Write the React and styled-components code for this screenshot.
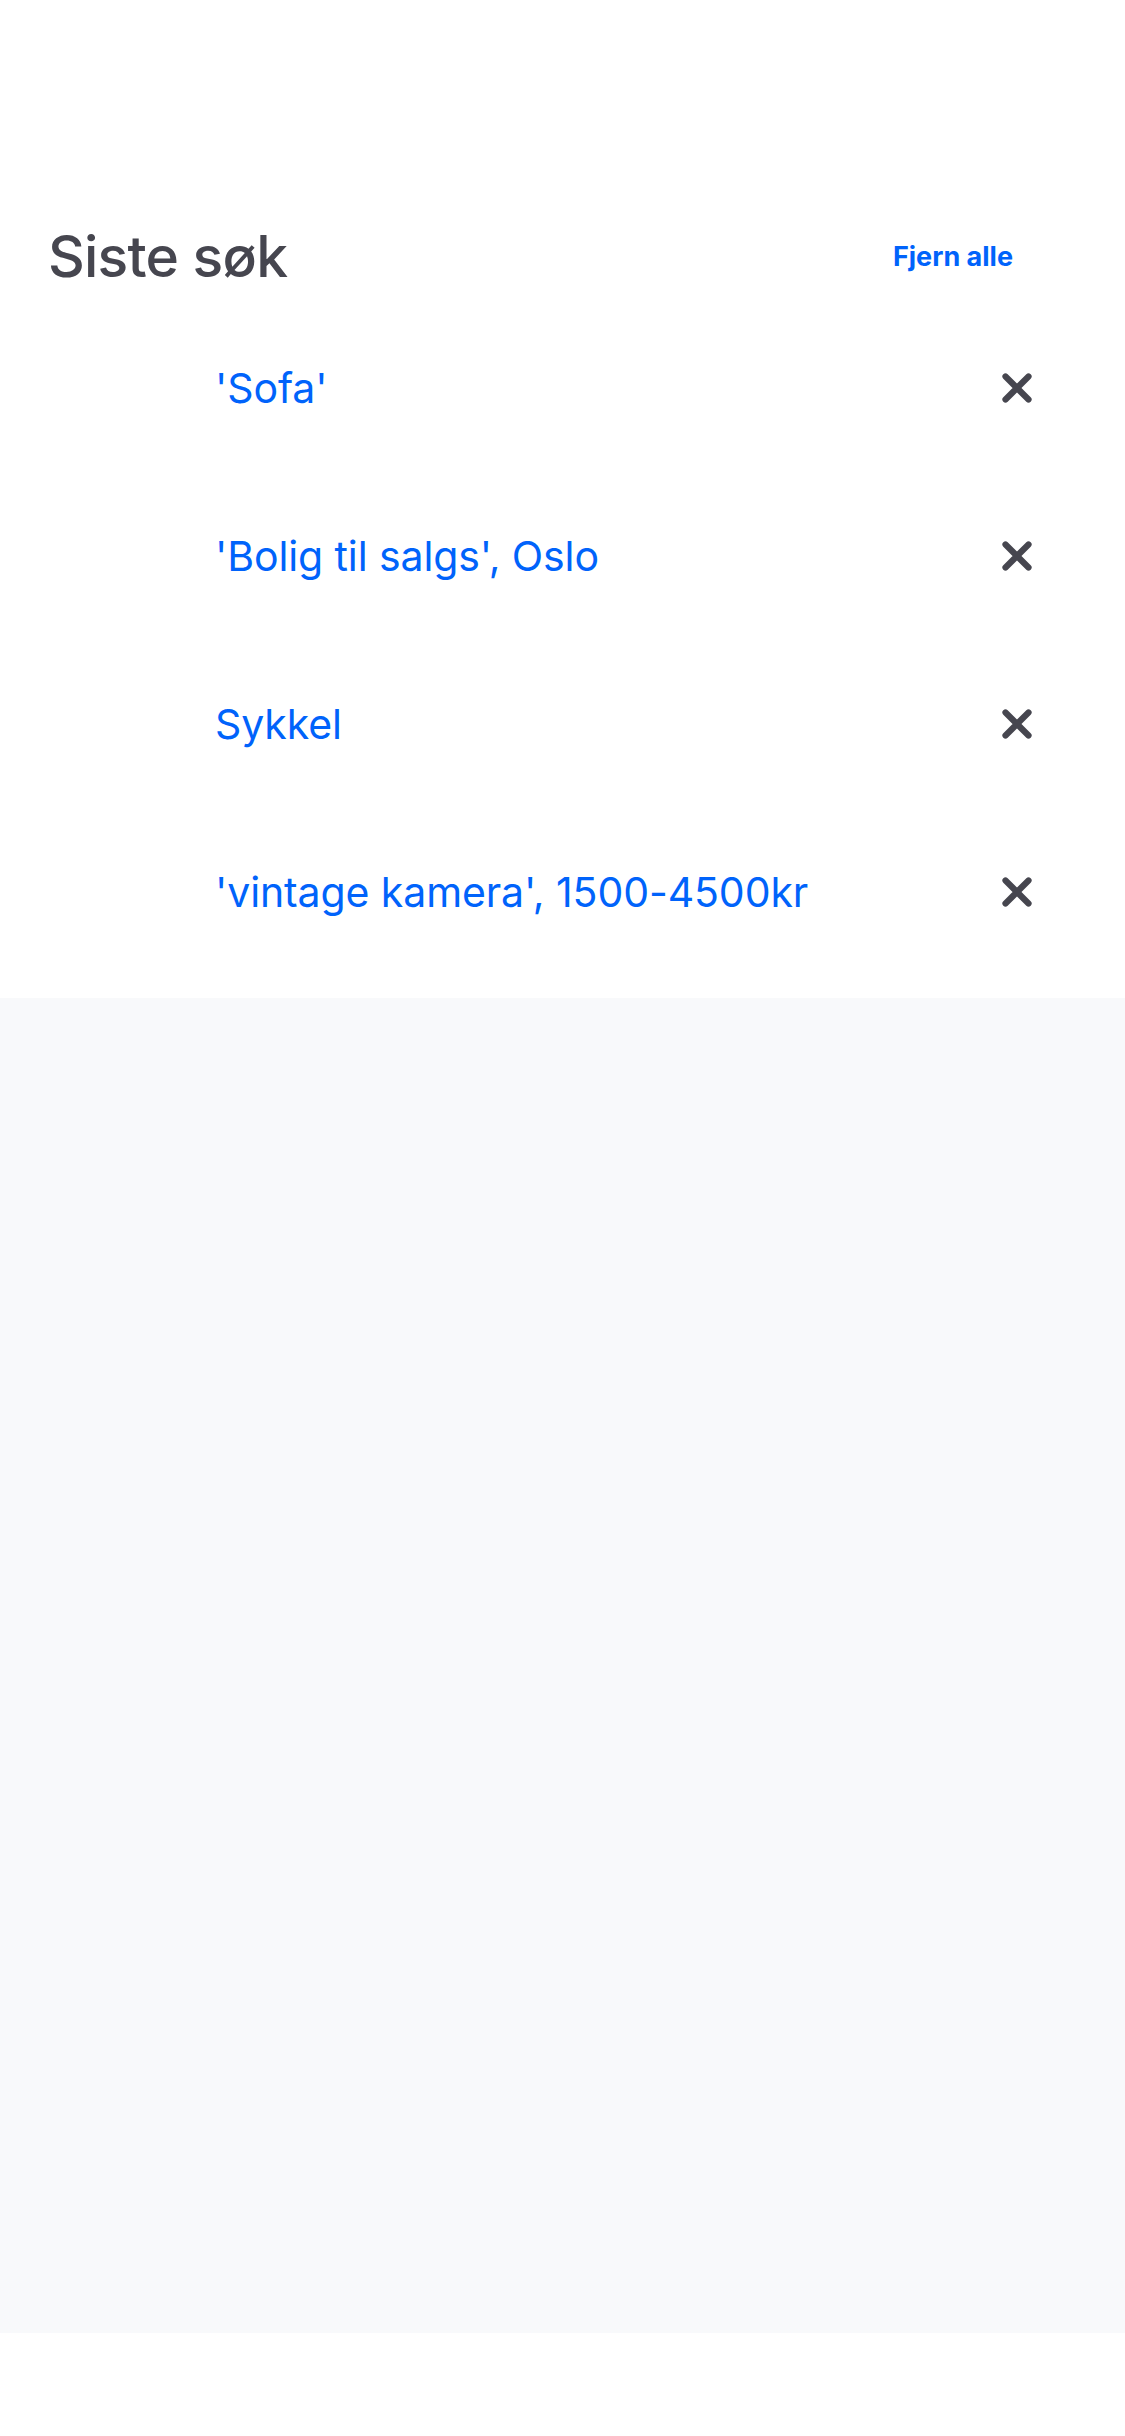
import React from "react";
import styled, { createGlobalStyle } from "styled-components";

const GlobalStyle = createGlobalStyle`
  html, body {
    margin: 0;
    padding: 0;
    background: #ffffff;
    font-family: Inter, "Noto Sans", "Liberation Sans", sans-serif;
  }
  * { box-sizing: border-box; }
`;

const Page = styled.div`
  width: 1125px;
  min-height: 2436px;
  background: #ffffff;
  display: flex;
  flex-direction: column;
`;

const RecentPanel = styled.section`
  background: #ffffff;
  padding-top: 208px;
  padding-bottom: 22px;
  display: flex;
  flex-direction: column;
`;

const Header = styled.div`
  height: 96px;
  display: flex;
  align-items: center;
  justify-content: space-between;
  padding: 0 112px 0 48px;
`;

const Title = styled.h1`
  margin: 0;
  font-size: 57px;
  font-weight: 500;
  letter-spacing: -0.8px;
  color: #46464f;
`;

const ClearAll = styled.button`
  border: none;
  background: none;
  padding: 0;
  font-family: inherit;
  font-size: 27px;
  font-weight: 700;
  color: #0063fb;
  cursor: pointer;
`;

const List = styled.ul`
  list-style: none;
  margin: 0;
  padding: 0;
`;

const Row = styled.li`
  height: 168px;
  display: flex;
  align-items: center;
  justify-content: space-between;
  padding: 0 93px 0 215px;
`;

const Query = styled.a`
  font-size: 41px;
  font-weight: 400;
  color: #0063fb;
  text-decoration: none;
  letter-spacing: -0.1px;
`;

const RemoveButton = styled.button`
  border: none;
  background: none;
  padding: 0;
  width: 30px;
  height: 30px;
  display: flex;
  align-items: center;
  justify-content: center;
  cursor: pointer;
`;

const EmptyArea = styled.div`
  height: 1335px;
  background: #f8f9fb;
`;

const CloseIcon = () => (
  <svg width="30" height="30" viewBox="0 0 30 30" aria-hidden="true">
    <path
      d="M3.5 3.5 L26.5 26.5 M26.5 3.5 L3.5 26.5"
      stroke="#46464f"
      strokeWidth="6.2"
      strokeLinecap="round"
      fill="none"
    />
  </svg>
);

const searches = [
  "'Sofa'",
  "'Bolig til salgs', Oslo",
  "Sykkel",
  "'vintage kamera', 1500-4500kr",
];

export default function App() {
  return (
    <>
      <GlobalStyle />
      <Page>
        <RecentPanel>
          <Header>
            <Title>Siste søk</Title>
            <ClearAll>Fjern alle</ClearAll>
          </Header>
          <List>
            {searches.map((s) => (
              <Row key={s}>
                <Query>{s}</Query>
                <RemoveButton aria-label="Fjern">
                  <CloseIcon />
                </RemoveButton>
              </Row>
            ))}
          </List>
        </RecentPanel>
        <EmptyArea />
      </Page>
    </>
  );
}
